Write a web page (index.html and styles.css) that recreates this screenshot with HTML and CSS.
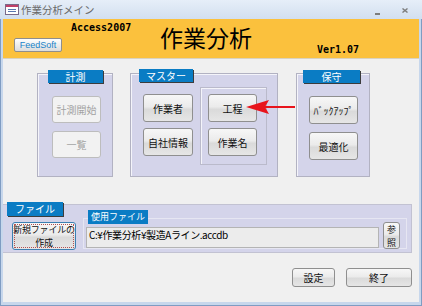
FILE: index.html
```html
<!DOCTYPE html>
<html lang="ja">
<head>
    <meta charset="UTF-8">
    <title>作業分析メイン</title>
    <link rel="stylesheet" href="styles.css">
</head>
<body>
    <div class="window">
        <div class="titlebar">
            <svg class="title-icon" width="14" height="11" viewBox="0 0 14 11">
                <rect x="0.5" y="0.5" width="13" height="10" fill="#fff" stroke="#7a6a8a"/>
                <rect x="1" y="1" width="12" height="2" fill="#c0406a"/>
                <rect x="3" y="5" width="8" height="1" fill="#5a78b0"/>
                <rect x="3" y="7" width="8" height="1" fill="#5a78b0"/>
            </svg>
            <span class="title-text">作業分析メイン</span>
            <div class="title-controls">
                <svg class="ctl-min" width="5" height="2" viewBox="0 0 5 2"><rect width="5" height="2" fill="#7d7d7d"/></svg>
                <svg class="ctl-close" width="6" height="5" viewBox="0 0 6 5"><path d="M0.5 0.5 L5.5 4.5 M5.5 0.5 L0.5 4.5" stroke="#7d7d7d" stroke-width="1.4"/></svg>
            </div>
        </div>

        <div class="client">
            <div class="header">
                <div class="feedsoft">FeedSoft</div>
                <div class="edition">Access2007</div>
                <div class="app-title">作業分析</div>
                <div class="version">Ver1.07</div>
            </div>

            <div class="groups">
                <div class="group group-measure">
                    <div class="group-label">計測</div>
                    <div class="btn-col">
                        <div class="btn disabled">計測開始</div>
                        <div class="btn disabled">一覧</div>
                    </div>
                </div>

                <div class="group group-master">
                    <div class="group-label">マスター</div>
                    <div class="master-row">
                        <div class="btn-col">
                            <div class="btn">作業者</div>
                            <div class="btn">自社情報</div>
                        </div>
                        <div class="sub-frame">
                            <div class="btn">工程</div>
                            <div class="btn">作業名</div>
                        </div>
                    </div>
                </div>

                <div class="group group-maint">
                    <div class="group-label">保守</div>
                    <div class="btn-col">
                        <div class="btn">ﾊﾞｯｸｱｯﾌﾟ</div>
                        <div class="btn">最適化</div>
                    </div>
                </div>
            </div>

            <div class="file-section">
                <div class="group-label">ファイル</div>
                <div class="file-row">
                    <div class="btn btn-new">新規ファイルの<br>作成</div>
                    <div class="file-frame">
                        <div class="group-label">使用ファイル</div>
                        <div class="path-row">
                            <div class="path-field">C:¥作業分析¥製造Aライン.accdb</div>
                            <div class="btn btn-browse">参<br>照</div>
                        </div>
                    </div>
                </div>
            </div>

            <div class="actions">
                <div class="btn btn-settings">設定</div>
                <div class="btn btn-exit">終了</div>
            </div>

            <svg class="pointer" width="49" height="14" viewBox="0 0 49 14">
                <polygon points="0,7 23,0 19,7 23,14" fill="#e8141c"/>
                <rect x="19" y="6" width="30" height="2" fill="#e8141c"/>
            </svg>
        </div>
    </div>
</body>
</html>
```

FILE: styles.css
```css
body {
    margin: 0;
    font-family: "Noto Sans CJK JP", sans-serif;
    font-size: 10px;
}
.window {
    width: 422px;
    height: 306px;
    overflow: hidden;
    background: #c7d7ec;
    box-shadow: inset 1px 0 #7f9cc2, inset -1px 0 #7f9cc2, inset 0 -1px #7f9cc2;
}
.titlebar {
    height: 19px;
    display: flex;
    align-items: center;
    padding-left: 5px;
    background: linear-gradient(#e6eef9, #dae5f3 60%, #d2dff0);
}
.title-icon {
    margin-right: 2px;
}
.title-text {
    color: #6a6a6a;
    font-size: 10.5px;
    line-height: 19px;
}
.title-controls {
    margin-left: auto;
    display: flex;
    align-items: center;
}
.ctl-min {
    margin-top: 8px;
}
.ctl-close {
    margin: 2px 14px 0 22px;
}

.client {
    position: relative;
    margin: 0 3px;
    height: 283px;
    background: #f0f0f0;
}
.header {
    display: flex;
    align-items: flex-start;
    height: 39px;
    background: #fbc13d;
    border-bottom: 1px solid #d9d2c0;
}
.feedsoft {
    margin: 19px 0 0 11px;
    width: 48px;
    height: 14px;
    box-sizing: border-box;
    border: 1px solid #8e8e8e;
    border-radius: 2px;
    background: linear-gradient(#ffffff, #ededed 50%, #dcdcdc);
    color: #1a84c9;
    font: 9px/12px "Liberation Sans", sans-serif;
    text-align: center;
}
.edition {
    margin: 3px 0 0 9px;
    width: 89px;
    font: bold 10px/12px "DejaVu Sans Mono", monospace;
}
.app-title {
    width: 157px;
    margin-top: 4px;
    font-size: 23px;
    line-height: 28px;
}
.version {
    margin-top: 25px;
    font: bold 10px/12px "DejaVu Sans Mono", monospace;
}

.groups {
    display: flex;
    padding: 14px 0 0 34px;
}
.group {
    height: 104px;
    box-sizing: border-box;
    background: #d4d4ea;
    border: 1px solid #b2b2c2;
    box-shadow: inset 1px 1px #f4f4fa;
}
.group-label {
    height: 13px;
    background: #0a7cc4;
    color: #fff;
    font-size: 10px;
    line-height: 13px;
    text-align: center;
    white-space: nowrap;
    box-shadow: 1px 1px 0 #3c3c3c;
}
.group-measure {
    width: 76px;
}
.group-measure .group-label {
    margin: -4px 0 0 10px;
    width: 55px;
}
.group-measure .btn-col {
    margin: 13px 0 0 14px;
    width: 49px;
}
.group-measure .btn {
    height: 27px;
}
.group-master {
    width: 148px;
    margin-left: 17px;
}
.group-master .group-label {
    margin: -5px 0 0 8px;
    width: 54px;
}
.master-row {
    display: flex;
}
.group-master .btn-col {
    margin: 12px 0 0 12px;
    width: 50px;
    gap: 6px;
}
.sub-frame {
    margin: 5px 0 0 7px;
    width: 67px;
    height: 78px;
    box-sizing: border-box;
    border: 1px solid #babacb;
    box-shadow: inset 1px 1px #f4f4fa;
    padding: 6px 0 0 7px;
    display: flex;
    flex-direction: column;
    gap: 6px;
}
.sub-frame .btn {
    width: 49px;
}
.group-maint {
    width: 74px;
    margin-left: 18px;
}
.group-maint .group-label {
    margin: -4px 0 0 6px;
    width: 57px;
}
.group-maint .btn-col {
    margin: 13px 0 0 12px;
    width: 49px;
}

.btn-col {
    display: flex;
    flex-direction: column;
    gap: 8px;
}
.btn {
    height: 28px;
    box-sizing: border-box;
    display: flex;
    align-items: center;
    justify-content: center;
    text-align: center;
    border: 1px solid #8f8f8f;
    border-radius: 3px;
    background: linear-gradient(#f7f7f7, #ebebeb 45%, #dadada 55%, #e6e6e6);
    color: #111;
    font-size: 10px;
    line-height: 11px;
}
.btn.disabled {
    border-color: #bdbdbd;
    background: #f2f2f2;
    color: #a2a2a2;
}

.file-section {
    margin-top: 27px;
    width: 409px;
    height: 49px;
    box-sizing: border-box;
    background: #d4d4ea;
    border: 1px solid #c2c2d2;
    border-left: none;
}
.file-section > .group-label {
    margin: -3px 0 0 4px;
    width: 56px;
    height: 14px;
    line-height: 14px;
}
.file-row {
    display: flex;
}
.btn-new {
    margin: 6px 0 0 9px;
    width: 64px;
    white-space: nowrap;
    font-size: 9px;
    letter-spacing: -0.2px;
    line-height: 13px;
    border-color: #3c7fb1;
    outline: 1px dotted #b05050;
    outline-offset: -3px;
}
.file-frame {
    margin: 2px 0 0 7px;
    width: 324px;
    height: 31px;
    box-sizing: border-box;
    border: 1px solid #e6e6f2;
}
.file-frame .group-label {
    margin: -9px 0 0 4px;
    width: 60px;
    height: 14px;
    line-height: 14px;
    font-size: 9px;
    box-shadow: none;
    text-align: left;
    padding-left: 3px;
    box-sizing: border-box;
}
.path-row {
    display: flex;
    align-items: flex-start;
}
.path-field {
    margin: 3px 0 0 2px;
    width: 293px;
    height: 21px;
    box-sizing: border-box;
    border: 1px solid #b4b4b4;
    background: #ececec;
    padding: 1px 0 0 2px;
    font-size: 10px;
    line-height: 11px;
    letter-spacing: -0.4px;
    white-space: nowrap;
}
.btn-browse {
    margin: -2px 0 0 4px;
    width: 17px;
    height: 27px;
    font-size: 9px;
    line-height: 13px;
}

.actions {
    display: flex;
    justify-content: flex-end;
    gap: 11px;
    margin-top: 15px;
    padding-right: 7px;
}
.actions .btn {
    height: 19px;
}
.btn-settings {
    width: 43px;
}
.btn-exit {
    width: 66px;
}

.pointer {
    position: absolute;
    left: 243px;
    top: 81px;
}
```
